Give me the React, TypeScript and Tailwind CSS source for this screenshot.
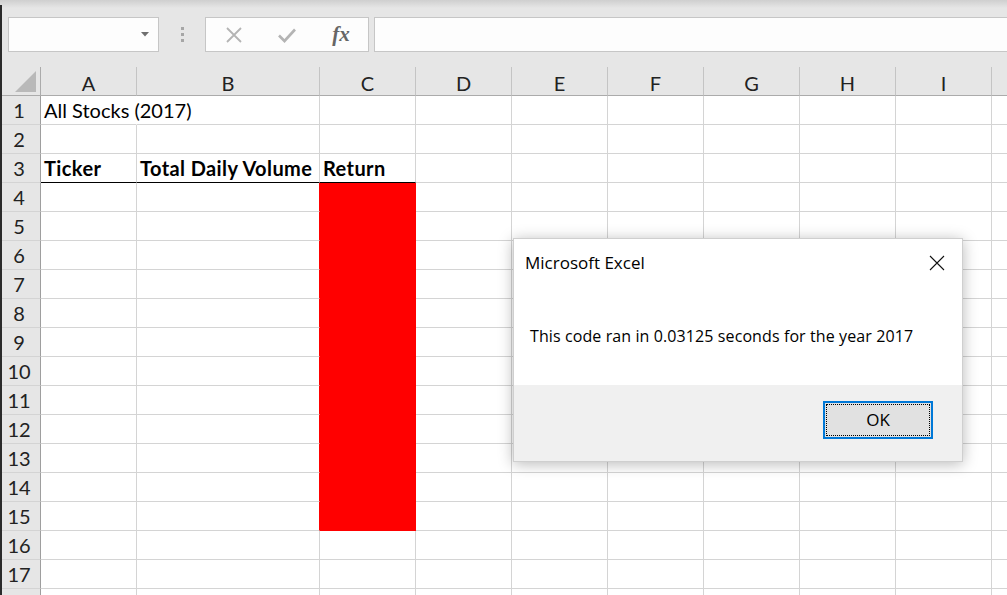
import * as React from 'react';

const COLS = ['A', 'B', 'C', 'D', 'E', 'F', 'G', 'H', 'I', ''];
const ROWS = Array.from({ length: 18 }, (_, i) => i + 1);

/** Zellinhalt: Zeile → Spalte → Text */
const cells: Record<number, Record<string, { text: string; bold?: boolean }>> = {
  1: { A: { text: 'All Stocks (2017)' } },
  3: {
    A: { text: 'Ticker', bold: true },
    B: { text: 'Total Daily Volume', bold: true },
    C: { text: 'Return', bold: true },
  },
};

function isRed(row: number, col: string) {
  return col === 'C' && row >= 4 && row <= 15;
}

function cellBorder(row: number, col: string) {
  if (isRed(row, col)) return 'border-r border-b border-[#ff0000]';
  const right =
    row === 1 && col === 'A' ? 'border-r border-r-white'
    : col === 'B' && row >= 4 && row <= 15 ? 'border-r border-r-[#ff0000]'
    : 'border-r border-r-[#d4d4d4]';
  const bottom =
    row === 3 && (col === 'A' || col === 'B' || col === 'C')
      ? 'border-b border-b-black'
      : 'border-b border-b-[#d4d4d4]';
  return `${right} ${bottom}`;
}

function Toolbar() {
  return (
    <div className="relative h-[67px] bg-[#e6e6e6]">
      <div className="absolute inset-x-0 top-0 h-[8px] bg-gradient-to-b from-[#cfcfcf] to-[#e6e6e6]" aria-hidden />
      <div className="relative flex items-start pt-[17px] pl-[8px]">
        {/* Namenfeld */}
        <div className="flex h-[35px] w-[151px] items-center justify-end border border-[#c6c6c6] bg-[#fdfdfd] pr-[9px]">
          <svg width="8" height="5" viewBox="0 0 8 5" aria-hidden>
            <path d="M0 0H8L4 4.5Z" fill="#6f6f6f" />
          </svg>
        </div>
        <div className="flex h-[35px] w-[46px] flex-col items-center justify-center gap-[3px]">
          <span className="h-[3px] w-[3px] bg-[#a6a6a6]" />
          <span className="h-[3px] w-[3px] bg-[#a6a6a6]" />
          <span className="h-[3px] w-[3px] bg-[#a6a6a6]" />
        </div>
        {/* Abbrechen / Eingeben / Funktion */}
        <div className="flex h-[35px] w-[164px] items-center border border-[#c6c6c6] bg-[#fdfdfd]">
          <div className="flex w-[54px] justify-center pl-[2px]">
            <svg width="18" height="18" viewBox="0 0 18 18" aria-hidden>
              <path d="M2 2L16 16M16 2L2 16" stroke="#b4b4b4" strokeWidth="1.8" />
            </svg>
          </div>
          <div className="flex w-[54px] justify-center">
            <svg width="20" height="16" viewBox="0 0 20 16" aria-hidden>
              <path d="M2 8.5L7.5 14L18 2.5" stroke="#b4b4b4" strokeWidth="2.6" fill="none" />
            </svg>
          </div>
          <div className="flex w-[54px] justify-center">
            <span className="font-['Liberation_Serif',serif] text-[21px] font-semibold italic leading-none text-[#666]">
              fx
            </span>
          </div>
        </div>
        <div className="ml-[5px] h-[35px] flex-1 border border-r-0 border-[#c6c6c6] bg-[#fdfdfd]" />
      </div>
    </div>
  );
}

function Sheet() {
  return (
    <div className="grid grid-cols-[41px_96px_183px_96px_96px_96px_96px_96px_96px_96px_96px] font-['Lato',sans-serif] text-[20px] text-black">
      {/* Kopfzeile */}
      <div className="relative h-[29px] border-r border-b border-[#ababab] bg-[#e6e6e6]">
        <svg className="absolute left-[15px] top-[4px]" width="22" height="22" viewBox="0 0 22 22" aria-hidden>
          <path d="M0 21H21V0Z" fill="#b9b9b9" />
        </svg>
      </div>
      {COLS.map((c, i) => (
        <div
          key={`h${i}`}
          className="flex h-[29px] items-center justify-center border-r border-b border-r-[#c4c4c4] border-b-[#ababab] bg-[#e6e6e6] pt-[3px] text-[#222]"
        >
          {c}
        </div>
      ))}

      {ROWS.map((r) => (
        <React.Fragment key={r}>
          <div className="flex h-[29px] items-end justify-center border-r border-b border-r-[#9e9e9e] border-b-[#d4d4d4] bg-[#e6e6e6] pr-[2px] leading-[27px] text-[#222]">
            {r}
          </div>
          {COLS.map((c, i) => {
            const v = c ? cells[r]?.[c] : undefined;
            return (
              <div
                key={`${r}-${i}`}
                className={`relative flex h-[29px] items-end whitespace-nowrap pl-[3px] leading-[27px] ${
                  isRed(r, c) ? 'bg-[#ff0000]' : 'bg-white'
                } ${cellBorder(r, c)}`}
              >
                {v && (
                  <span className={`relative z-10 ${v.bold ? 'font-bold tracking-[0.4px]' : ''}`}>{v.text}</span>
                )}
              </div>
            );
          })}
        </React.Fragment>
      ))}
    </div>
  );
}

function MessageBox() {
  return (
    <div className="absolute left-[513px] top-[238px] z-20 flex h-[224px] w-[450px] flex-col border border-[#cfcfcf] bg-white font-['Open_Sans',sans-serif] shadow-[0_2px_14px_rgba(0,0,0,0.28)]">
      <div className="flex items-center justify-between pl-[11px] pr-[17px] pt-[11px]">
        <span className="text-[17px] text-black">Microsoft Excel</span>
        <svg width="16" height="16" viewBox="0 0 16 16" aria-hidden>
          <path d="M1 1L15 15M15 1L1 15" stroke="#111" strokeWidth="1.1" />
        </svg>
      </div>
      <div className="flex-1 pl-[16px] pt-[48px] text-[16px] tracking-[0.1px] text-black">
        This code ran in 0.03125 seconds for the year 2017
      </div>
      <div className="flex h-[76px] items-start justify-end bg-[#f0f0f0] pr-[29px] pt-[16px]">
        <button
          type="button"
          className="flex h-[38px] w-[110px] items-center justify-center border-2 border-[#0078d7] bg-[#e1e1e1] p-[1px]"
        >
          <span className="flex h-full w-full items-center justify-center border border-dotted border-black text-[17px] text-black">
            OK
          </span>
        </button>
      </div>
    </div>
  );
}

export default function App() {
  return (
    <div className="relative h-[595px] w-[1007px] overflow-hidden bg-white">
      <div className="absolute bottom-0 left-0 top-[5px] z-30 w-[2px] bg-[#2b2b2b]" aria-hidden />
      <Toolbar />
      <Sheet />
      <MessageBox />
    </div>
  );
}
